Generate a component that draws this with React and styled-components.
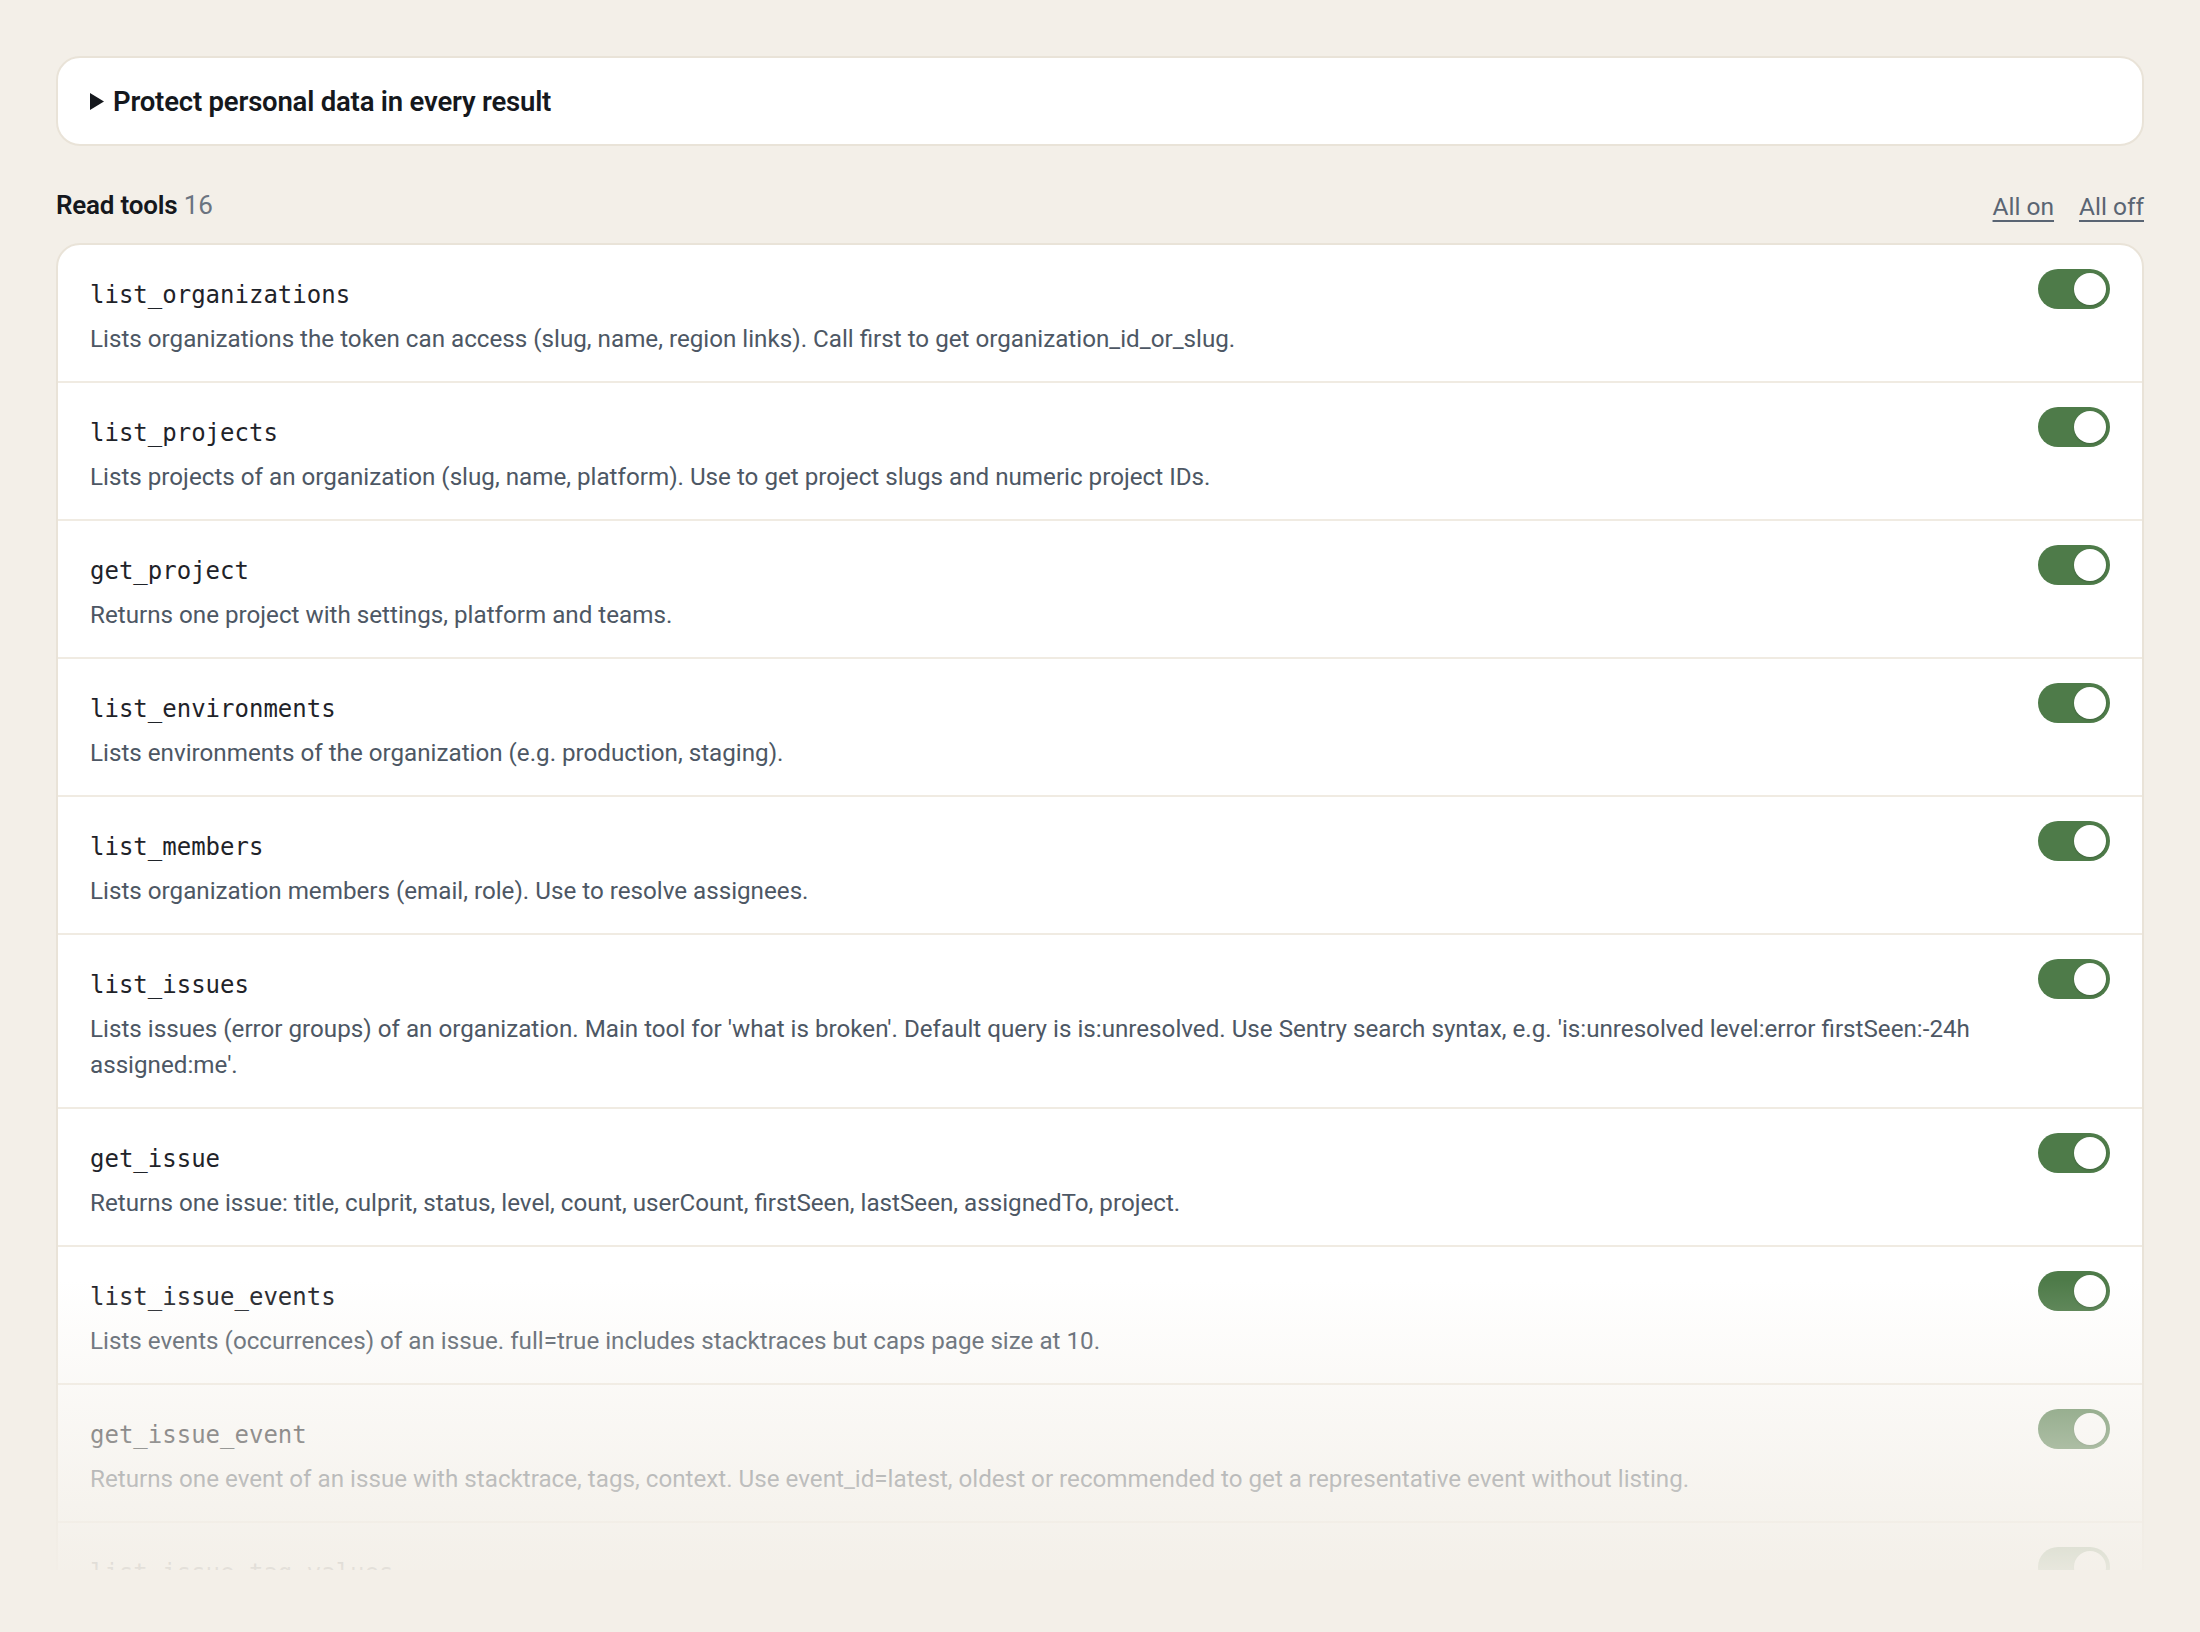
import React from "react";
import styled, { createGlobalStyle } from "styled-components";

const BG = "#f3efe8";

const GlobalStyle = createGlobalStyle`
  html, body {
    margin: 0;
    padding: 0;
    background: ${BG};
  }
  body {
    font-family: Roboto, "Liberation Sans", Arial, sans-serif;
    color: #1f2329;
    -webkit-font-smoothing: antialiased;
  }
  * { box-sizing: border-box; }
`;

const Page = styled.div`
  display: flex;
  flex-direction: column;
  padding: 56px 56px 0;
  height: 1632px;
  overflow: hidden;
`;

const Disclosure = styled.details`
  background: #ffffff;
  border: 2px solid #e9e3d8;
  border-radius: 24px;
  height: 90px;
  display: flex;
  align-items: center;
  padding: 0 32px;
`;

const Summary = styled.summary`
  list-style: none;
  display: flex;
  align-items: center;
  gap: 9px;
  height: 86px;
  font-size: 27.5px;
  font-weight: 600;
  letter-spacing: -0.2px;
  color: #15181d;
  cursor: pointer;
  &::-webkit-details-marker { display: none; }
`;

const Caret = styled.svg`
  width: 14px;
  height: 17px;
  flex: none;
`;

const SectionHeader = styled.div`
  display: flex;
  align-items: center;
  justify-content: space-between;
  height: 36px;
  margin-top: 41px;
  margin-bottom: 20px;
`;

const SectionTitle = styled.h2`
  margin: 0;
  font-size: 26px;
  font-weight: 600;
  letter-spacing: -0.2px;
  color: #15181d;
`;

const Count = styled.span`
  font-weight: 400;
  color: #6b7480;
`;

const Links = styled.div`
  display: flex;
  gap: 25px;
  padding-top: 3px;
`;

const LinkButton = styled.button`
  background: none;
  border: none;
  padding: 0;
  font-family: inherit;
  font-size: 24.5px;
  color: #5a6573;
  text-decoration: underline;
  text-underline-offset: 5px;
  text-decoration-thickness: 1.5px;
  cursor: pointer;
`;

const Viewport = styled.div`
  position: relative;
  height: 1327px;
  overflow: hidden;
  &::after {
    content: "";
    position: absolute;
    left: 0;
    right: 0;
    bottom: 0;
    height: 290px;
    background: linear-gradient(to bottom, rgba(243, 239, 232, 0) 0%, rgba(243, 239, 232, 0.45) 45%, rgba(243, 239, 232, 0.88) 92%, rgba(243, 239, 232, 0.93) 100%);
    pointer-events: none;
  }
`;

const ToolCard = styled.div`
  background: #ffffff;
  border: 2px solid #e9e3d8;
  border-radius: 24px;
  overflow: hidden;
`;

const ToolRow = styled.div`
  display: flex;
  align-items: flex-start;
  gap: 32px;
  padding: 24px 32px;
  & + & {
    border-top: 2px solid #f0ebe2;
  }
`;

const ToolText = styled.div`
  flex: 1;
  min-width: 0;
  padding-top: 8px;
`;

const ToolName = styled.div`
  font-family: "DejaVu Sans Mono", "Liberation Mono", monospace;
  font-size: 24px;
  line-height: 36px;
  color: #1f2329;
`;

const ToolDesc = styled.p`
  margin: 8px 0 0;
  font-size: 24.2px;
  line-height: 36px;
  color: #4d5764;
`;

const Switch = styled.button`
  flex: none;
  position: relative;
  width: 72px;
  height: 40px;
  border: none;
  padding: 0;
  border-radius: 20px;
  background: ${(p) => (p.$on ? "#4e7b49" : "#c9c4ba")};
  cursor: pointer;
  &::after {
    content: "";
    position: absolute;
    top: 4px;
    left: ${(p) => (p.$on ? "36px" : "4px")};
    width: 32px;
    height: 32px;
    border-radius: 50%;
    background: #ffffff;
    box-shadow: 0 1px 2px rgba(0, 0, 0, 0.18);
  }
`;

const tools = [
  ["list_organizations", "Lists organizations the token can access (slug, name, region links). Call first to get organization_id_or_slug."],
  ["list_projects", "Lists projects of an organization (slug, name, platform). Use to get project slugs and numeric project IDs."],
  ["get_project", "Returns one project with settings, platform and teams."],
  ["list_environments", "Lists environments of the organization (e.g. production, staging)."],
  ["list_members", "Lists organization members (email, role). Use to resolve assignees."],
  ["list_issues", "Lists issues (error groups) of an organization. Main tool for 'what is broken'. Default query is is:unresolved. Use Sentry search syntax, e.g. 'is:unresolved level:error firstSeen:-24h assigned:me'."],
  ["get_issue", "Returns one issue: title, culprit, status, level, count, userCount, firstSeen, lastSeen, assignedTo, project."],
  ["list_issue_events", "Lists events (occurrences) of an issue. full=true includes stacktraces but caps page size at 10."],
  ["get_issue_event", "Returns one event of an issue with stacktrace, tags, context. Use event_id=latest, oldest or recommended to get a representative event without listing."],
  ["list_issue_tag_values", "Lists the values of one tag on an issue (e.g. browser, release, user) with counts."],
  ["get_release", "Returns one release with commits, deploys and new issue counts."],
];

export default function App() {
  const [state, setState] = React.useState(() => tools.map(() => true));
  const setAll = (v) => setState(tools.map(() => v));
  return (
    <>
      <GlobalStyle />
      <Page>
        <Disclosure>
          <Summary>
            <Caret viewBox="0 0 14 17">
              <path d="M0 0 L14 8.5 L0 17 Z" fill="#15181d" />
            </Caret>
            Protect personal data in every result
          </Summary>
        </Disclosure>
        <SectionHeader>
          <SectionTitle>
            Read tools <Count>16</Count>
          </SectionTitle>
          <Links>
            <LinkButton onClick={() => setAll(true)}>All on</LinkButton>
            <LinkButton onClick={() => setAll(false)}>All off</LinkButton>
          </Links>
        </SectionHeader>
        <Viewport>
          <ToolCard>
            {tools.map(([name, desc], i) => (
              <ToolRow key={name}>
                <ToolText>
                  <ToolName>{name}</ToolName>
                  <ToolDesc>{desc}</ToolDesc>
                </ToolText>
                <Switch
                  $on={state[i]}
                  aria-label={name}
                  onClick={() => setState((s) => s.map((v, j) => (j === i ? !v : v)))}
                />
              </ToolRow>
            ))}
          </ToolCard>
        </Viewport>
      </Page>
    </>
  );
}
